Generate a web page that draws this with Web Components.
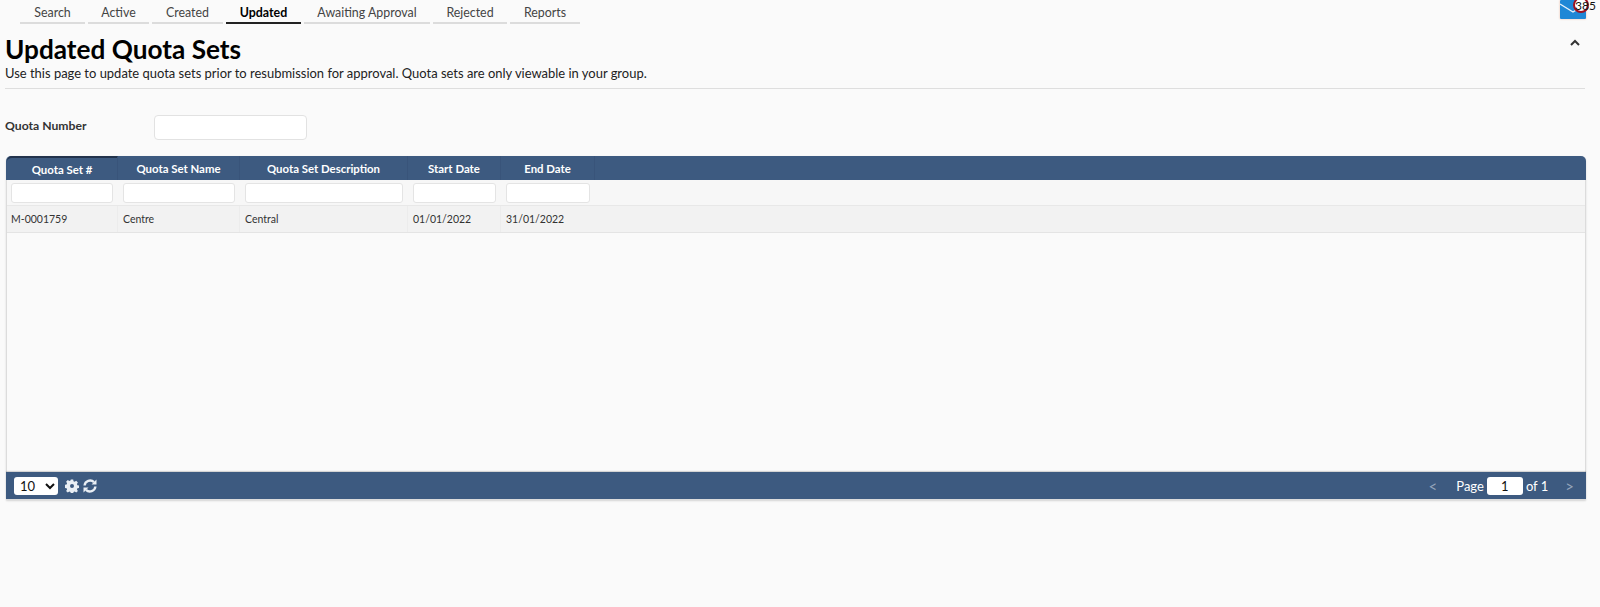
<!DOCTYPE html>
<html lang="en"><head><meta charset="utf-8"><title>Updated Quota Sets</title>
<style>
html,body{margin:0;padding:0;background:#fafafa;height:607px;overflow:hidden;font-family:Lato,"Open Sans",sans-serif;color:#111}
</style></head><body>
<app-page></app-page>
<script>
function def(name, html){
  customElements.define(name, class extends HTMLElement{
    constructor(){super();const r=this.attachShadow({mode:'open'});r.innerHTML=html;}
  });
}
def('nav-tab',`<style>
:host{display:block;height:24px;box-sizing:border-box;border-bottom:2px solid #dcdcdc;margin-right:3px;color:#444;font-size:12.4px;line-height:25px;text-align:center;width:var(--w)}
:host([active]){border-bottom-color:#222;color:#000;font-weight:700}
</style><slot></slot>`);
def('nav-tabs',`<style>:host{display:flex;height:24px;padding-left:20px}</style><slot></slot>`);
def('mail-badge',`<style>
:host{display:block;position:absolute;top:0;right:14px;width:26px;height:19px}
svg{display:block;box-shadow:0 0 2px #f0bfa8}
i{position:absolute;left:13px;top:-3px;width:16px;height:16px;box-sizing:border-box;border:2px solid #a01220;border-radius:50%;background:#fff}
b{position:absolute;left:15px;top:0;font:400 12px/11px Lato,sans-serif;color:#111;white-space:nowrap}
</style><svg width="26" height="19" viewBox="0 0 26 19"><rect width="26" height="19" rx="1" fill="#1f87d6"/><path d="M0 4 L13 12 L26 4" fill="none" stroke="#e8f2fb" stroke-width="1.4"/></svg><i></i><b>385</b>`);
def('page-header',`<style>
:host{display:block;position:relative;margin:0 15px 0 5px;height:64px;border-bottom:1px solid #dedede;box-sizing:content-box}
h1{margin:0;font:700 26.2px/32px Lato,sans-serif;color:#000;padding-top:9px;height:33px}
p{margin:0;font:400 12.96px/16px Lato,sans-serif;color:#222;margin-top:-1px}
svg{position:absolute;right:5px;top:15px}
</style><h1>Updated Quota Sets</h1><p>Use this page to update quota sets prior to resubmission for approval. Quota sets are only viewable in your group.</p>
<svg width="10" height="8" viewBox="0 0 10 8"><path d="M1 6 L5 2 L9 6" fill="none" stroke="#333" stroke-width="2"/></svg>`);
def('quota-filter',`<style>
:host{display:flex;align-items:center;margin:26px 0 0 5px;height:25px}
label{width:149px;font:700 12.2px/16px Lato,sans-serif;color:#333;margin-top:-4px}
input{box-sizing:border-box;width:153px;height:25px;border:1px solid #e2e2e2;border-radius:4px;background:#fff;padding:0;margin:0}
</style><label>Quota Number</label><input type="text">`);
const cols=[111,122,168,93,94];
const H=['Quota Set #','Quota Set Name','Quota Set Description','Start Date','End Date'];
const D=['M-0001759','Centre','Central','01/01/2022','31/01/2022'];
const gc=cols.map(c=>c+'px').join(' ')+' 1fr';
def('data-grid',`<style>
:host{display:flex;flex-direction:column;margin:16px 14px 0 6px;height:344px;box-sizing:border-box;border:1px solid #dcdcdc;border-top:0;border-radius:5px 5px 0 0;box-shadow:0 1px 2px rgba(0,0,0,.15);font-family:Lato,sans-serif}
.row{display:grid;grid-template-columns:${gc};flex:none}
.head{height:24px;background:#3d5a80;border-radius:5px 5px 0 0;margin:0 -1px;padding-left:1px;color:#fff;font-weight:700;font-size:11.4px;line-height:25px;text-align:center}
.head>div{border-right:1px solid #39547a;box-sizing:border-box}
.head>div:first-child{border-top:2px solid #22334c;line-height:23px;border-top-left-radius:5px}
.head>div:last-child{border:0}
.filters{height:26px;background:#f7f7f7;border-bottom:1px solid #e8e8e8;box-sizing:border-box}
.filters div{padding:3px 5px 0 5px;box-sizing:border-box}
.filters div:first-child{padding-left:4px}
.filters input{display:block;box-sizing:border-box;width:100%;height:20px;border:1px solid #e4e4e4;border-radius:3px;background:#fff;padding:0;margin:0}
.data{height:27px;background:#f2f2f2;border-bottom:1px solid #e4e4e4;box-sizing:border-box;font-size:10.5px;line-height:26px;color:#333}
.data div{padding-left:5px;border-right:1px solid #ececec}
.data div:first-child{padding-left:4px}
.data div:nth-last-child(-n+2){border:0}
.body{flex:1}
.foot{flex:none;height:27px;background:#3d5a80;margin:0 -1px;display:flex;align-items:center;color:#fff;font-size:13px;padding:0 12px 0 8px;box-shadow:0 -1px 1px rgba(0,0,0,.15)}
select{width:44px;height:18px;font:400 13px Lato,sans-serif;border:0;border-radius:3px;background:#fff;color:#111;padding:0 0 0 2px;margin:0 7px 0 0}
svg{display:block;margin-right:4px}
.sp{flex:1}
.pg{width:36px;height:18px;box-sizing:border-box;border:0;border-radius:3px;background:#fff;text-align:center;font:400 13px Lato,sans-serif;color:#111;margin:0 3px 0 3px;padding:0}
.ar{color:#95a5ba;font-size:15px}
</style>
<div class="row head">${H.map(h=>`<div>${h}</div>`).join('')}<div></div></div>
<div class="row filters">${cols.map(()=>`<div><input type="text"></div>`).join('')}<div></div></div>
<div class="row data">${D.map(d=>`<div>${d}</div>`).join('')}<div></div></div>
<div class="body"></div>
<div class="foot"><select><option>10</option></select>
<svg width="14" height="14" viewBox="0 0 14 14"><path fill="#e9eef4" fill-rule="evenodd" d="M5.8 0.5h2.4l.3 1.8 1.2.5 1.5-1 1.7 1.7-1 1.5.5 1.2 1.8.3v2.4l-1.8.3-.5 1.2 1 1.5-1.7 1.7-1.5-1-1.2.5-.3 1.8H5.8l-.3-1.8-1.2-.5-1.5 1-1.7-1.7 1-1.5-.5-1.2-1.8-.3V5.8l1.8-.3.5-1.2-1-1.5 1.7-1.7 1.5 1 1.2-.5zM7 5a2 2 0 1 0 0 4 2 2 0 0 0 0-4z"/></svg>
<svg width="14" height="14" viewBox="0 0 14 14"><g fill="none" stroke="#e9eef4" stroke-width="2.4"><path d="M1.6 6.5A5.5 5.5 0 0 1 11 3.2"/><path d="M12.4 7.5A5.5 5.5 0 0 1 3 10.8"/></g><path fill="#e9eef4" d="M13.5 .5v5h-5zM.5 13.5v-5h5z"/></svg>
<span class="sp"></span><span class="ar">&lt;</span><span style="margin-left:19px">Page</span><input class="pg" type="text" value="1"><span>of 1</span><span class="ar" style="margin-left:17px">&gt;</span></div>`);
const tabs=[['Search',65],['Active',61],['Created',71],['Updated',75,1],['Awaiting Approval',126],['Rejected',74],['Reports',70]];
def('app-page',`<style>:host{display:block;position:relative;height:607px}</style>
<nav-tabs>${tabs.map(t=>`<nav-tab style="--w:${t[1]}px" ${t[2]?'active':''}>${t[0]}</nav-tab>`).join('')}</nav-tabs>
<mail-badge></mail-badge><page-header></page-header><quota-filter></quota-filter><data-grid></data-grid>`);
</script></body></html>
